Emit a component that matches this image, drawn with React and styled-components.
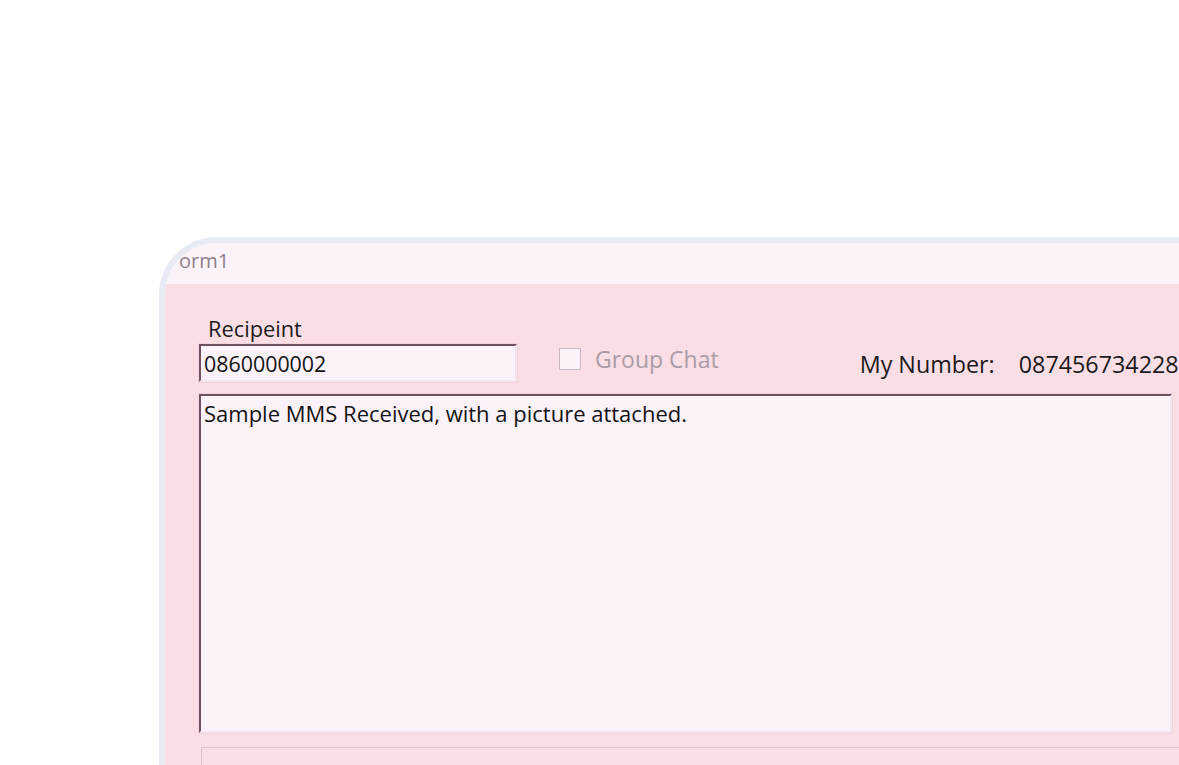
import React from "react";
import styled, { createGlobalStyle } from "styled-components";

const Global = createGlobalStyle`
  html, body { margin: 0; padding: 0; background: #ffffff; overflow: hidden; }
  body { font-family: "Open Sans", "Noto Sans", sans-serif; }
`;

const Page = styled.div`
  width: 1179px;
  height: 765px;
  padding: 237px 0 0 159px;
  box-sizing: border-box;
  overflow: hidden;
`;

const Window = styled.div`
  width: 1100px;
  height: 620px;
  border: 6px solid #e8ebf4;
  border-radius: 58px 0 0 0;
  overflow: hidden;
  display: flex;
  flex-direction: column;
  box-sizing: border-box;
`;

const TitleBar = styled.div`
  height: 41px;
  flex: none;
  box-sizing: border-box;
  background: #fbf3f9;
  display: flex;
  align-items: center;
  padding: 0 0 7px 14px;
  font-size: 20px;
  color: #8f7f8b;
`;

const Content = styled.div`
  flex: 1;
  background: #f9dfe5;
  padding: 31px 0 0 34px;
  display: flex;
  flex-direction: column;
`;

const TopRow = styled.div`
  display: flex;
  align-items: flex-end;
`;

const Field = styled.div`
  display: flex;
  flex-direction: column;
`;

const Label = styled.div`
  font-size: 21.8px;
  line-height: 27px;
  color: #1c1a1c;
  margin: 0 0 2px 9px;
`;

const TextBox = styled.div`
  width: ${(p) => p.$w}px;
  height: ${(p) => p.$h}px;
  box-sizing: border-box;
  background: #fbf3f9;
  border-top: 2px solid #6f5161;
  border-left: 2px solid #6f5161;
  border-right: 2px solid #f3e6ee;
  border-bottom: 2px solid #f3e6ee;
  box-shadow: 0 0 0 1px #f0d3dc;
  font-size: ${(p) => (p.$multi ? 22 : 21.4)}px;
  color: #141214;
  display: flex;
  align-items: ${(p) => (p.$multi ? "flex-start" : "center")};
  padding: ${(p) => (p.$multi ? "2px 0 0 3px" : "0 0 0 3px")};
  white-space: nowrap;
`;

const CheckItem = styled.label`
  display: flex;
  align-items: center;
  gap: 14px;
  margin: 0 0 11px 42px;
  font-size: 23px;
  color: #ac9ca7;
  line-height: 24px;
  white-space: nowrap;
`;

const Box = styled.span`
  width: 22px;
  height: 22px;
  flex: none;
  box-sizing: border-box;
  border: 1px solid #c9b8c2;
  background: #fbf3f9;
`;

const NumberInfo = styled.div`
  display: flex;
  gap: 24px;
  margin: 0 0 6px 141px;
  font-size: 23.3px;
  line-height: 24px;
  color: #1c1a1c;
  white-space: nowrap;
`;

const Gap = styled.div`
  height: ${(p) => p.$h}px;
  flex: none;
`;

const Panel = styled.div`
  margin-left: 2px;
  height: 40px;
  border-top: 1px solid #dcc4cc;
  border-left: 1px solid #dcc4cc;
`;

export default function App() {
  return (
    <Page>
      <Global />
      <Window>
        <TitleBar>orm1</TitleBar>
        <Content>
          <TopRow>
            <Field>
              <Label>Recipeint</Label>
              <TextBox $w={318} $h={38}>0860000002</TextBox>
            </Field>
            <CheckItem>
              <Box />
              Group Chat
            </CheckItem>
            <NumberInfo>
              <span>My Number:</span>
              <span>087456734228</span>
            </NumberInfo>
          </TopRow>
          <Gap $h={12} />
          <TextBox $w={973} $h={339} $multi>
            Sample MMS Received, with a picture attached.
          </TextBox>
          <Gap $h={14} />
          <Panel />
        </Content>
      </Window>
    </Page>
  );
}
